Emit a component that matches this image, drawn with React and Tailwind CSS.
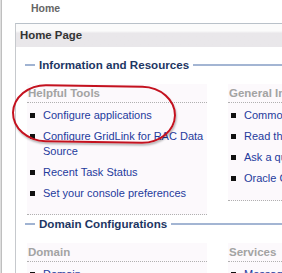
import React from 'react';

const font = { fontFamily: '"Liberation Sans", Arial, sans-serif' };

const Bullet = () => <span className="mt-[5px] h-[5px] w-[5px] shrink-0 bg-[#111]" />;

const Item = ({ children, nowrap }) => (
  <li className="flex items-start gap-[8px] pl-[3px]">
    <Bullet />
    <span className={`text-[11px] leading-[15px] text-[#1f3b9c] ${nowrap ? 'whitespace-nowrap' : ''}`}>{children}</span>
  </li>
);

const SectionHeader = ({ title }) => (
  <div className="flex h-[16px] items-center">
    <span className="ml-[9px] h-[2px] w-[10px] bg-[#a0b3d2]" />
    <span className="ml-[4px] whitespace-nowrap text-[11.6px] font-bold leading-[16px] text-[#1d3663]">{title}</span>
    <span className="ml-[4px] h-[2px] flex-1 bg-[#a3b5d3]" />
  </div>
);

const Column = ({ title, width, children }) => (
  <div className={`${width} bg-[#fcf9fc]`}>
    <div className="h-[19px] border-b border-dotted border-[#b0b0b0] pl-[1px] text-[11.5px] font-bold leading-[18px] text-[#a3a3a3] whitespace-nowrap">
      {title}
    </div>
    {children}
  </div>
);

export default function App() {
  return (
    <div className="relative flex h-[273px] w-[282px] overflow-hidden bg-white" style={font}>
      <div className="w-[2px] shrink-0 border-l border-[#dedede] bg-[#bfbfbf]" />
      <div className="flex-1">
        <div className="h-[23px] pl-[29px] text-[10.5px] font-bold leading-[16px] text-[#666]">Home</div>
        <div className="ml-[13px] w-[300px] border border-r-0 border-[#c6c9cd] border-t-[#b9c1c9]">
          <div className="flex h-[23px] items-center bg-gradient-to-b from-[#fbfbfb] from-30% to-[#e9e7ea] to-40% pl-[4px]">
            <span className="text-[11.4px] font-bold text-[#333]">Home Page</span>
          </div>
          <div className="pt-[10px]">
            <SectionHeader title="Information and Resources" />
            <div className="mt-[11px] flex items-start">
              <div className="ml-[11px]">
                <Column title="Helpful Tools" width="w-[180px]">
                  <ul className="flex flex-col gap-[6px] border-b border-dotted border-[#b0b0b0] pb-[13px] pt-[5px]">
                    <Item>Configure applications</Item>
                    <Item>Configure GridLink for RAC Data Source</Item>
                    <Item>Recent Task Status</Item>
                    <Item>Set your console preferences</Item>
                  </ul>
                </Column>
              </div>
              <div className="ml-[21px]">
                <Column title="General Information" width="w-[120px]">
                  <ul className="flex flex-col gap-[6px] border-b border-dotted border-[#b0b0b0] pb-[14px] pt-[5px]">
                    <Item nowrap>Common Administration Task Descriptions</Item>
                    <Item nowrap>Read the documentation</Item>
                    <Item nowrap>Ask a question on My Oracle Support</Item>
                    <Item nowrap>Oracle Guardian Overview</Item>
                  </ul>
                </Column>
              </div>
            </div>
            <div className="mt-px">
              <SectionHeader title="Domain Configurations" />
            </div>
            <div className="mt-[11px] flex items-start">
              <div className="ml-[11px]">
                <Column title="Domain" width="w-[180px]">
                  <ul className="flex flex-col gap-[6px] pb-[13px] pt-[5px]">
                    <Item>Domain</Item>
                  </ul>
                </Column>
              </div>
              <div className="ml-[21px]">
                <Column title="Services" width="w-[120px]">
                  <ul className="flex flex-col gap-[6px] pb-[13px] pt-[5px]">
                    <Item nowrap>Messaging</Item>
                  </ul>
                </Column>
              </div>
            </div>
          </div>
        </div>
      </div>
      {/* red annotation ring */}
      <div className="pointer-events-none absolute left-[12px] top-[85px] h-[58px] w-[164px] rotate-[1deg] rounded-[34px/29px] border-2 border-[#c4121f] shadow-[1px_2px_2px_rgba(0,0,0,0.25)]" />
    </div>
  );
}
